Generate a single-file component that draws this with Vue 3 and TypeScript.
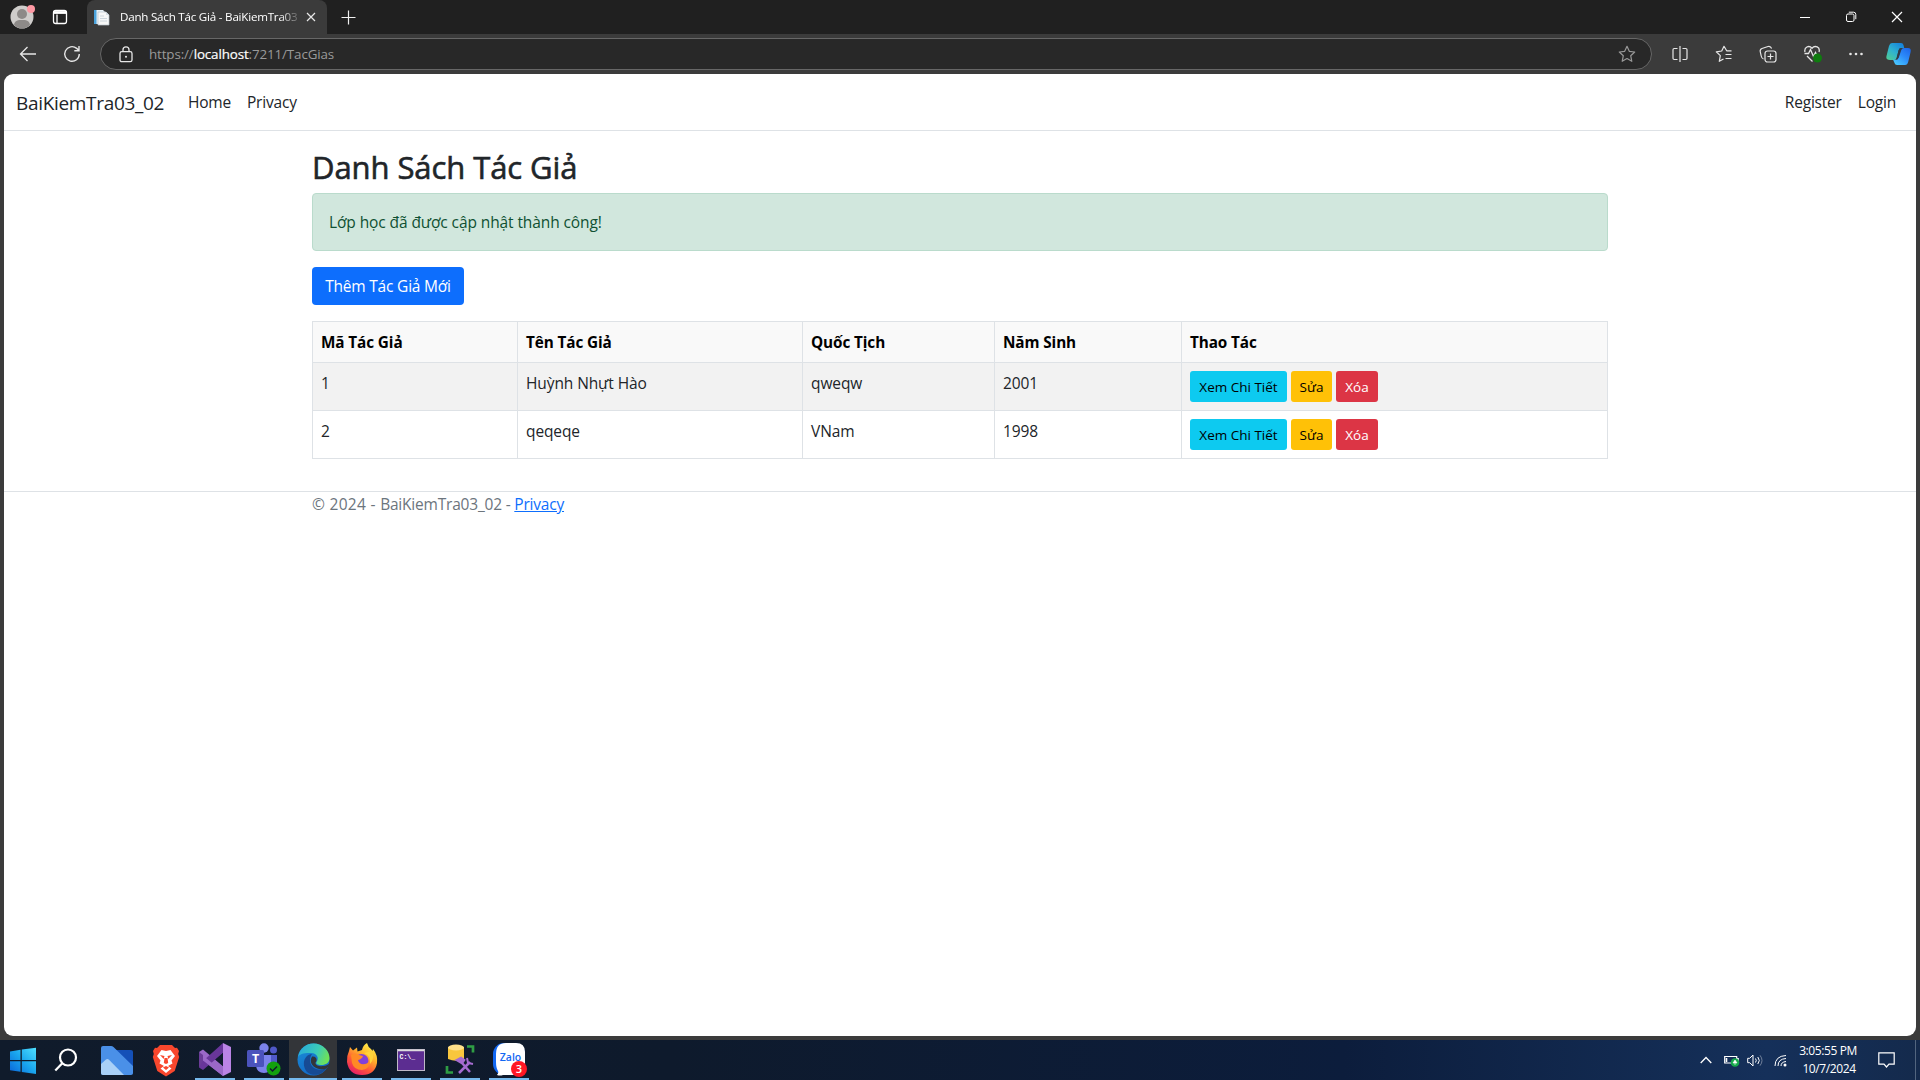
<script setup lang="ts">
interface Author {
  id: number
  name: string
  country: string
  born: number
}

const authors: Author[] = [
  { id: 1, name: 'Huỳnh Nhựt Hào', country: 'qweqw', born: 2001 },
  { id: 2, name: 'qeqeqe', country: 'VNam', born: 1998 },
]
const headings: string[] = ['Mã Tác Giả', 'Tên Tác Giả', 'Quốc Tịch', 'Năm Sinh', 'Thao Tác']
</script>

<template>
  <div class="screen">
    <header class="tabs">
      <svg class="avatar" width="26" height="26" viewBox="0 0 26 26">
        <circle cx="12" cy="13" r="11.5" fill="#cfcdcb" />
        <circle cx="12" cy="10" r="5" fill="#8d8a88" />
        <path d="M4 21c1-5 4-5 8-5s7 0 8 5c-2 2-5 3.500-8 3.500s-6-1.500-8-3.500z" fill="#8d8a88" />
        <circle cx="21" cy="5" r="4" fill="#ff99a4" />
      </svg>
      <svg class="workspaces" width="16" height="16" viewBox="0 0 16 16" fill="none" stroke="#fff" stroke-width="1.300">
        <rect x="1.500" y="1.500" width="13" height="13" rx="2.200" />
        <path d="M5 5.500v9" />
        <path d="M2 3.500h12" stroke-width="2.800" />
      </svg>
      <div class="tab">
        <svg width="17" height="17" viewBox="0 0 17 17">
          <path d="M1 1h9l2 2v12H1z" fill="#e9f1f7" />
          <path d="M1 1h2.500v14H1z" fill="#4ba3dc" />
          <path d="M5 3h8l3 3v10H5z" fill="#f7f7f7" stroke="#b9c3cb" stroke-width=".7" />
          <path d="M7 7h4M7 9.500h7M7 12h7" stroke="#ccd5dc" />
          <path d="M13 3v3h3" fill="#d5dde3" />
        </svg>
        <span class="tab-title">Danh Sách Tác Giả - BaiKiemTra03</span>
        <svg class="tab-close" width="10" height="10" viewBox="0 0 10 10" stroke="#e8e8e8" stroke-width="1.200"><path d="M1 1l8 8M9 1l-8 8" /></svg>
      </div>
      <svg class="plus" width="15" height="15" viewBox="0 0 15 15" stroke="#f0f0f0" stroke-width="1.200"><path d="M7.500 .5v14M.5 7.500h14" /></svg>
      <div class="window-buttons">
        <svg width="12" height="12" viewBox="0 0 12 12" stroke="#fff"><path d="M1 6.500h10" /></svg>
        <svg width="12" height="12" viewBox="0 0 12 12" fill="none" stroke="#fff"><rect x="1.500" y="3" width="7.500" height="7.500" rx="1.500" /><path d="M3.800 1.200h4.700q2.300 0 2.300 2.300v4.700" /></svg>
        <svg width="12" height="12" viewBox="0 0 12 12" stroke="#fff" stroke-width="1.200"><path d="M1 1l10 10M11 1l-10 10" /></svg>
      </div>
    </header>

    <div class="toolbar">
      <svg class="back" width="18" height="16" viewBox="0 0 18 16" fill="none" stroke="#e6e6e6" stroke-width="1.300"><path d="M17 8H1.500M8.500 1l-7 7 7 7" /></svg>
      <svg class="reload" width="18" height="18" viewBox="0 0 18 18" fill="none" stroke="#e6e6e6" stroke-width="1.400"><path d="M16.300 9A7.300 7.300 0 1 1 13.700 3.400L16 5.500M16 1v4.700h-4.700" /></svg>
      <div class="address">
        <svg class="lock" width="14" height="17" viewBox="0 0 14 17" fill="none" stroke="#e6e6e6" stroke-width="1.300">
          <rect x="1" y="5.700" width="12" height="10" rx="1.800" />
          <path d="M4 5.700V3.800a3 3 0 0 1 6 0v1.900" /><circle cx="7" cy="10.700" r="1" fill="#e6e6e6" stroke="none" />
        </svg>
        <span class="url">https://<b>localhost</b>:7211/TacGias</span>
        <svg class="fav" width="18" height="18" viewBox="0 0 18 18" fill="none" stroke="#989898" stroke-width="1.200" stroke-linejoin="round"><path d="M9 1.300l2.300 5 5.400.7-4 3.700 1.100 5.600L9 13.600l-4.800 2.700 1.100-5.600-4-3.700 5.400-.7z" /></svg>
      </div>
      <div class="actions">
        <svg width="18" height="18" viewBox="0 0 18 18" fill="none" stroke="#e6e6e6" stroke-width="1.200"><path d="M6.500 3.500H3.200Q2 3.500 2 4.700v8.600q0 1.200 1.200 1.200h3.300M11.500 3.500h3.300q1.200 0 1.200 1.200v8.600q0 1.200-1.200 1.200h-3.300M9 1v16" /></svg>
        <svg width="18" height="18" viewBox="0 0 18 18" fill="none" stroke="#e6e6e6" stroke-width="1.200" stroke-linejoin="round"><path d="M16.500 5.800h-4.800L9 1.300 6.700 6l-5.400.8 4 3.800-1 5.700 4.200-2.300M10.500 9.500h6M10.500 13.500h6" /></svg>
        <svg width="18" height="18" viewBox="0 0 18 18" fill="none" stroke="#e6e6e6" stroke-width="1.200"><rect x="6" y="6" width="11" height="11" rx="2.500" /><path d="M11.500 8.500v6M8.500 11.500h6M4.500 14C3 13.500 2.500 12.500 2.200 11L1.200 6.500Q.8 4.300 3 3.500L9 1.500q2.500-.7 3.600 2" /></svg>
        <svg class="essentials" width="20" height="18" viewBox="0 0 20 18" fill="none" stroke="#e6e6e6" stroke-width="1.300">
          <path d="M2 7C.8 2.200 6-.2 9 3.200 12-.2 17.500 2 16 7M1.500 8.500h4l2-4 3 7 2-4 1 2M4 11l5.500 5.500" />
          <circle cx="14.500" cy="13" r="4.500" fill="#0f7b0f" stroke="none" />
        </svg>
        <svg width="18" height="18" viewBox="0 0 18 18" fill="#e6e6e6"><circle cx="3.500" cy="9" r="1.300" /><circle cx="9" cy="9" r="1.300" /><circle cx="14.500" cy="9" r="1.300" /></svg>
        <svg class="copilot" width="26" height="24" viewBox="0 0 26 24">
          <defs>
            <linearGradient id="cpA" x1="0" y1="1" x2=".8" y2="0"><stop stop-color="#52cf8f" /><stop offset=".5" stop-color="#2fb3cf" /><stop offset="1" stop-color="#1683dc" /></linearGradient>
            <linearGradient id="cpB" x1="1" y1="0" x2=".2" y2="1"><stop stop-color="#1c62e8" /><stop offset=".5" stop-color="#2c8bfa" /><stop offset="1" stop-color="#49c8ff" /></linearGradient>
          </defs>
          <path d="M6 1h9q2 0 2.500 2l.7 3h-3q-2 0-2.600 2.200L10.500 16Q10 18 8 18H4q-4.500 0-3.500-4L3 4Q3.800 1 6 1z" fill="url(#cpA)" />
          <path d="M7 17.500l3 .2q1.800-.2 2.300-2L14.500 8q.6-2 2.500-2h5q3.500 0 2.600 4l-2.300 9.500Q21.500 23 19 23h-8q-2 0-2.500-2z" fill="url(#cpB)" />
          <path d="M12.600 8.200Q13.200 6 15.200 6H18q-2 0-2.700 2l-2.500 7.500q-.8 2.300-3 2.300 .8-.4 1-1.800z" fill="#303b48" />
        </svg>
      </div>
    </div>

    <main class="page">
      <nav class="navbar">
        <a class="brand">BaiKiemTra03_02</a>
        <a class="home">Home</a>
        <a class="privacy">Privacy</a>
        <a class="register">Register</a>
        <a class="login">Login</a>
      </nav>
      <div class="container">
        <h1>Danh Sách Tác Giả</h1>
        <div class="alert">Lớp học đã được cập nhật thành công!</div>
        <button class="add">Thêm Tác Giả Mới</button>
        <table>
          <colgroup><col class="c1" /><col class="c2" /><col class="c3" /><col class="c4" /><col /></colgroup>
          <thead><tr><th v-for="h in headings" :key="h">{{ h }}</th></tr></thead>
          <tbody>
            <tr v-for="a in authors" :key="a.id">
              <td>{{ a.id }}</td>
              <td>{{ a.name }}</td>
              <td>{{ a.country }}</td>
              <td>{{ a.born }}</td>
              <td>
                <div class="row-actions">
                  <button class="info">Xem Chi Tiết</button>
                  <button class="warning">Sửa</button>
                  <button class="danger">Xóa</button>
                </div>
              </td>
            </tr>
          </tbody>
        </table>
      </div>
      <footer><span>© 2024 - </span>BaiKiemTra03_02 - <a>Privacy</a></footer>
    </main>

    <div class="taskbar">
      <div class="task start">
        <svg width="28" height="28" viewBox="0 0 28 28">
          <defs><linearGradient id="win" x1="0" y1="1" x2="1" y2="0"><stop stop-color="#0a63d8" /><stop offset=".5" stop-color="#19a5ee" /><stop offset="1" stop-color="#4fe0ff" /></linearGradient></defs>
          <path d="M1 4.500l10.500-1.700V13H1zM12.800 2.600L27 .8V13H12.800zM1 14.300h10.500v10.500L1 23.200zM12.800 14.300H27V27l-14.200-2z" fill="url(#win)" />
        </svg>
      </div>
      <div class="task search">
        <svg width="24" height="24" viewBox="0 0 24 24" fill="none" stroke="#fff" stroke-width="2.200"><circle cx="14" cy="9.500" r="8" /><path d="M8.300 15.200L1.300 22.500" /></svg>
      </div>
      <div class="task files">
        <svg width="32" height="29" viewBox="0 0 32 29">
          <path d="M12 4h18q2 0 2 2v21q0 1-1 1L9 8z" fill="#1450b8" />
          <path d="M2 0h8q1.500 0 2.500 1L32 20v7q0 2-2 2H2q-2 0-2-2V2q0-2 2-2z" fill="#4a90e8" />
          <path d="M0 18l5-4.500q1.500-1 3 .3L23 29H2q-2 0-2-2z" fill="#a9d0f7" />
        </svg>
      </div>
      <div class="task brave">
        <svg width="28" height="33" viewBox="0 0 28 33">
          <path d="M8 1h12l3 3 2-.3L27 7l-.8 3 1 3-4.500 14Q18 30 14 32.500 10 30 5.300 27L.8 13l1-3L1 7l2-3.300L5 4z" fill="#f9472d" />
          <path d="M14 7l4.500-1 4.500 6-3.500 4.500 1 3L16 22l3.500 2.500-5.500 4.500-5.500-4.500L12 22l-4.500-2.500 1-3L5 12l4.500-6z" fill="#fff" />
          <path d="M8 11l4.500 1-.8 3zM20 11l-4.500 1 .8 3zM12.500 14h3l.7 5-2.200 1-2.200-1zM11 23.500l3-1.500 3 1.500-3 2.500z" fill="#f9472d" />
        </svg>
      </div>
      <div class="task open vs">
        <svg width="33" height="33" viewBox="0 0 33 33">
          <path d="M0 9l4-2.500L25 24l-1 9L4 17.500z" fill="#9a68c8" />
          <path d="M0 9l4 3v9.500L0 24.500z" fill="#6b3c98" />
          <path d="M0 24.500l4 2.500L24 10V0L4 18z" fill="#68369a" />
          <path d="M4 12.500L24 29v4L4 17.500z" fill="#9a68c8" />
          <path d="M24 0l8 4v25l-8 4z" fill="#ba83e5" />
          <path d="M24 10v13l-7.500-6.500z" fill="#101b2d" />
        </svg>
      </div>
      <div class="task open teams">
        <svg width="34" height="33" viewBox="0 0 34 33">
          <circle cx="17" cy="5" r="4.700" fill="#7b83eb" /><circle cx="26.500" cy="7" r="3.500" fill="#5059c9" />
          <path d="M20 12h10v9q0 6-6 6h-4z" fill="#5059c9" />
          <path d="M9 12h15v11q0 7-7 7t-8-7z" fill="#7b83eb" />
          <rect x="0" y="7" width="17" height="17" rx="1.500" fill="#4b53bc" />
          <text x="8.500" y="20" text-anchor="middle" font-size="12.500" font-weight="700" fill="#fff">T</text>
          <circle cx="26.500" cy="25.500" r="7" fill="#13a10e" /><path d="M23 25.500l2.500 2.500 4.500-4.500" fill="none" stroke="#101b2d" stroke-width="1.500" />
        </svg>
      </div>
      <div class="task open edge">
        <svg width="33" height="33" viewBox="0 0 33 33">
          <defs>
            <linearGradient id="eg" x1="0" y1=".2" x2="1" y2=".5"><stop stop-color="#27a9dc" /><stop offset=".6" stop-color="#3bcbb8" /><stop offset="1" stop-color="#6fe257" /></linearGradient>
            <linearGradient id="eb" x1="0" y1="0" x2=".5" y2="1"><stop stop-color="#1b8fd8" /><stop offset="1" stop-color="#1268c5" /></linearGradient>
          </defs>
          <circle cx="16.500" cy="16.500" r="16" fill="url(#eb)" />
          <path d="M1 14C3 5 9 .5 16.500.5 26 .5 32.500 8 32.500 15c0 5-4 7-8 7-4 0-6-1-5-3 3-4 .5-8.500-5-9C8 9.500 2 11 1 14z" fill="url(#eg)" />
          <path d="M10 29C3 20 9 11 15 11c-4 6-2 14 6 15.500 4 .8 7-.5 9-2-4 7-13 10-20 4.500z" fill="#174b94" />
          <path d="M15 13.500c3-.5 5 1.500 4.500 4-.3 1.500-1.300 1.800-1 3 .5 2.300 4 3 8 2.500 2.500-.2 4-1 6-2.500-.5 2-1.500 3.500-3 5-2 .8-4 1-5.500.8-8-.8-12.500-7-9-12.800z" fill="#333539" />
        </svg>
      </div>
      <div class="task open firefox">
        <svg width="32" height="33" viewBox="0 0 32 33">
          <defs><linearGradient id="fx" x1=".8" y1="0" x2=".2" y2="1"><stop stop-color="#fff44f" /><stop offset=".35" stop-color="#ffb52a" /><stop offset=".65" stop-color="#ff5a36" /><stop offset="1" stop-color="#e3166d" /></linearGradient></defs>
          <path d="M3 8l1-4 3 3.500 4-3 .5 4L16 7q1-5 5-7 1 4 4 6l1.500 2L27 6q5 6 4 14-2 12-15 12T1 19Q.5 13 3 8z" fill="url(#fx)" />
          <circle cx="15.500" cy="18" r="7" fill="#8140d8" />
          <path d="M5 12q4-3 8 0l4 1q-1 3-5 4 1 5 7 4 4-1 4-4 2 9-7 10-8 0-10-7z" fill="#ff8a25" />
          <path d="M18 10q7 2 6 11 5-5 2-13z" fill="#ffd43a" />
        </svg>
      </div>
      <div class="task open cmd">
        <svg width="28" height="22" viewBox="0 0 28 22">
          <rect x=".5" y=".5" width="27" height="21" fill="#5c2d91" stroke="#bfb9c8" /><path d="M1 1.500h26" stroke="#ddd" stroke-width="1.500" />
          <text x="2.500" y="9.500" class="prompt" font-size="6.500" font-weight="700" fill="#fff">C:\_</text>
        </svg>
      </div>
      <div class="task open sql">
        <svg width="30" height="31" viewBox="0 0 30 31">
          <path d="M3 3v12q8 3.500 16 0V3z" fill="#f8c63d" /><ellipse cx="11" cy="3.500" rx="8" ry="3" fill="#ffe08a" />
          <path d="M22 2.500h6v6M8 28.500H2V22" fill="none" stroke="#2f9e44" stroke-width="2.700" />
          <path d="M14 29L25 18M12 16l4-2 3 2-2 3zM17 19l8 9" stroke="#a56bd0" stroke-width="2.500" fill="#a56bd0" /><path d="M22 14l1 5 5 1" fill="none" stroke="#a56bd0" stroke-width="2" />
        </svg>
      </div>
      <div class="task open zalo">
        <svg width="34" height="34" viewBox="0 0 34 34">
          <rect width="32" height="32" rx="11" fill="#1268f3" /><path d="M13 0h10q9 0 9 9v14q0 9-9 9H10q-3 1-6 0 2-2 1-4-2-3-2-9V11Q3 0 13 0z" fill="#fff" />
          <text x="17.500" y="18" text-anchor="middle" font-size="10.500" font-weight="600" fill="#1268f3">Zalo</text>
          <circle cx="26" cy="26" r="8" fill="#ff1724" /><text x="26" y="30" text-anchor="middle" font-size="11" font-weight="600" fill="#fff">3</text>
        </svg>
      </div>
      <div class="tray">
        <svg class="chev" width="12" height="8" viewBox="0 0 12 8" fill="none" stroke="#fff" stroke-width="1.300"><path d="M.7 7L6 1.500 11.300 7" /></svg>
        <svg class="battery" width="16" height="13" viewBox="0 0 16 13"><path d="M.7 2.500h12V9h-12z" fill="none" stroke="#fff" stroke-width="1.200" /><path d="M2.500 4v4M14 4v3" stroke="#fff" stroke-width="1.600" /><circle cx="11" cy="8.500" r="4.300" fill="#17a94b" /><path d="M11 6l2 3h-4zM11 8v3" fill="#fff" stroke="#fff" stroke-width=".6" /></svg>
        <svg class="sound" width="17" height="13" viewBox="0 0 17 13" fill="none" stroke="#fff"><path d="M.7 4.300h2L6 1v11L2.700 8.700h-2zM8.500 4.500q1.500 2 0 4M10.800 3q3 3.500 0 7" /><path d="M13 1.300q4 5.200 0 10.400" stroke="#70809a" /></svg>
        <svg class="wifi" width="13" height="13" viewBox="0 0 13 13" fill="none" stroke="#fff"><path d="M1 12Q1 2 12 1.500M4 12Q4 5 12 4.500M7 12Q7 8 12 7.500" /><circle cx="11" cy="11" r="1.500" fill="#fff" stroke="none" /></svg>
        <div class="clock"><span>3:05:55 PM</span><span class="date">10/7/2024</span></div>
        <svg class="notice" width="17" height="16" viewBox="0 0 17 16" fill="none" stroke="#fff" stroke-width="1.200"><path d="M.8.800h15.400v11.400H11L8.500 15 6 12.200H.8z" /></svg>
        <i class="peek"></i>
      </div>
    </div>
  </div>
</template>

<style>
body {
  margin: 0;
  overflow: hidden;
}
</style>

<style scoped>
* { box-sizing: border-box; }
.screen { width: 1920px; height: 1080px; display: flex; flex-direction: column; background: #3b3b3b; font-family: "Open Sans", "Noto Sans", sans-serif; font-size: 15.5px; line-height: 24px; letter-spacing: -0.1px; color: #212529; white-space: nowrap; }
svg { flex: none; display: block; letter-spacing: 0; }
button { font-family: inherit; border: 0; padding: 0; letter-spacing: inherit; }
.tabs { height: 34px; display: flex; align-items: center; background: #202020; }
.avatar { margin-left: 10px; }
.workspaces { margin-left: 16px; }
.tab { width: 240px; height: 34px; margin-left: 19px; padding: 0 11px 0 6px; display: flex; align-items: center; background: #3b3b3b; border-radius: 8px 8px 0 0; }
.tab-title { width: 181px; margin-left: 10px; color: #fff; font-size: 11.6px; letter-spacing: -0.22px; mask-image: linear-gradient(90deg, #000 160px, transparent 182px); }
.tab-close { margin-left: 5px; }
.plus { margin-left: 14px; }
.window-buttons { margin-left: auto; margin-right: 17px; display: flex; gap: 34px; }
.toolbar { height: 40px; display: flex; align-items: center; }
.back { margin-left: 19px; }
.reload { margin-left: 26px; }
.address { width: 1552px; height: 32px; margin-left: 19px; padding: 0 15px 0 18px; display: flex; align-items: center; background: #282828; border: 1px solid #676767; border-radius: 16px; }
.url { margin-left: 16px; font-size: 13.4px; letter-spacing: -0.13px; color: #9a9a9a; }
.url b { font-weight: 400; color: #fff; -webkit-text-stroke: 0.2px #fff; }
.fav { margin-left: auto; }
.actions { display: flex; align-items: center; margin-left: 19px; gap: 26px; }
.essentials { margin-right: -2px; }
.copilot { margin-left: -5px; }
.page { width: 1912px; height: 962px; margin-left: 4px; background: #fff; border-radius: 9px; }
.navbar { height: 57px; display: flex; align-items: center; padding: 0 20px 0 12px; border-bottom: 1px solid #dee2e6; letter-spacing: -0.2px; }
.brand { width: 147px; padding-top: 2px; font-size: 19px; letter-spacing: -0.32px; }
.home { margin-left: 25px; width: 43px; }
.privacy { margin-left: 16px; }
.register { margin-left: auto; }
.login { margin-left: 16px; }
.container { width: 1296px; margin: 0 auto; }
h1 { margin: 0 0 8px; padding-top: 16px; height: 54px; font-size: 31px; line-height: 40px; font-weight: 500; letter-spacing: -0.08px; -webkit-text-stroke: 0.6px #212529; }
.alert { height: 58px; padding: 16px; border: 1px solid #badbcc; border-radius: 4px; background: #d1e7dd; color: #0f5132; }
.add { display: block; width: 152px; height: 38px; margin-top: 16px; border-radius: 4px; background: #0d6efd; color: #fff; font-size: 15.5px; letter-spacing: -0.2px; }
table { width: 1296px; margin-top: 16px; border-collapse: collapse; table-layout: fixed; }
.c1 { width: 205px; }
.c2 { width: 285px; }
.c3 { width: 192px; }
.c4 { width: 187px; }
th, td { padding: 8px; border: 1px solid #dee2e6; text-align: left; vertical-align: top; }
th { height: 41px; background: #f9f9f9; color: #000; font-size: 15.3px; font-weight: 700; letter-spacing: -0.1px; }
td { height: 48px; }
tbody tr:nth-child(odd) td { background: #f2f2f2; }
.row-actions { display: flex; gap: 4px; }
.row-actions button { height: 31px; padding-top: 1px; border-radius: 3px; font-size: 13.5px; letter-spacing: 0; color: #000; }
.info { width: 97px; background: #0dcaf0; }
.warning { width: 41px; background: #ffc107; }
.row-actions .danger { width: 42px; background: #dc3545; color: #fff; }
footer { margin-top: 32px; padding-left: 308px; border-top: 1px solid #dee2e6; color: #6c757d; letter-spacing: -0.2px; }
footer span { letter-spacing: 0.3px; }
footer a { color: #0d6efd; text-decoration: underline; }
.taskbar { height: 40px; margin-top: 4px; display: flex; background: linear-gradient(90deg, #101b2b 0, #0e1a2c 35%, #0c1d3c 70%, #15305a 92%, #142a4c 100%); }
.task { width: 49px; height: 40px; padding-top: 1px; display: flex; align-items: center; justify-content: center; }
.start { width: 45px; }
.search { width: 42px; padding-top: 0; }
.files { width: 59px; }
.brave { width: 40px; padding-top: 0; }
.vs { margin-left: 9px; }
.open { width: 40px; margin-right: 9px; border-bottom: 2px solid #76b9ed; }
.edge { width: 48px; margin-left: -4px; margin-right: 5px; background: #333539; }
.zalo { padding-left: 2px; }
.prompt { font-family: "Liberation Mono", monospace; }
.tray { margin-left: auto; display: flex; align-items: center; color: #fff; }
.battery { margin-left: 12px; }
.sound { margin-left: 7px; }
.wifi { margin-left: 10px; }
.clock { width: 58px; margin-left: 12px; display: flex; flex-direction: column; align-items: center; font-size: 12px; line-height: 18px; letter-spacing: -0.4px; }
.date { padding-left: 2px; }
.notice { margin-left: 21px; }
.peek { width: 1px; height: 40px; margin-left: 20px; margin-right: 4px; background: #52657f; }
</style>
